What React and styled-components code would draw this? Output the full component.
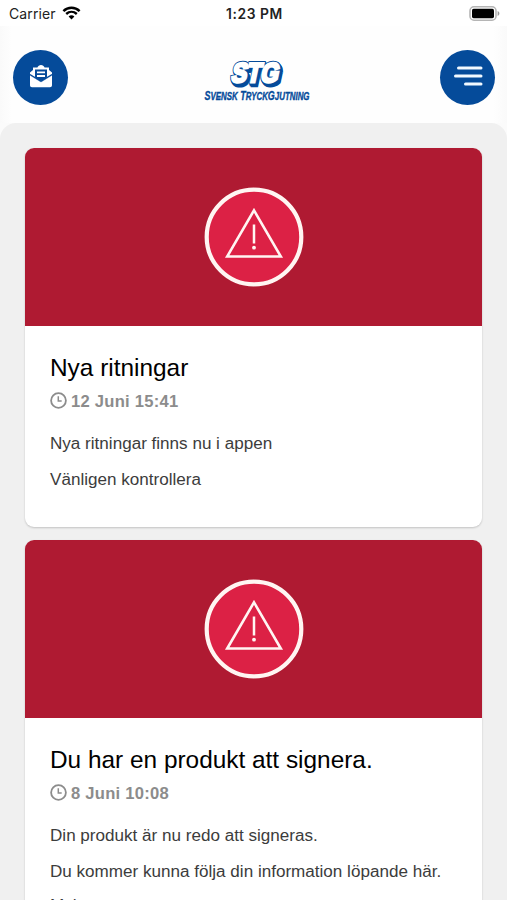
import React from "react";
import styled, { createGlobalStyle } from "styled-components";

const GlobalStyle = createGlobalStyle`
  * {
    box-sizing: border-box;
  }

  body {
    margin: 0;
    background-color: #fff;
    font-family: "Liberation Sans", Arial, sans-serif;
  }
`;

const AppContainer = styled.div`
  width: 100%;
  height: 900px;
  overflow: hidden;
  display: flex;
  flex-direction: column;
  background-color: #fbfbfb;
`;

const StatusBar = styled.div`
  height: 26px;
  flex-shrink: 0;
  padding: 0 7px 0 9px;
  display: grid;
  grid-template-columns: 1fr auto 1fr;
  align-items: center;
  background-color: #fff;
  font-family: Inter, sans-serif;
  color: #222;
`;

const Carrier = styled.div`
  display: flex;
  align-items: center;
  gap: 6px;
  font-size: 14px;
  letter-spacing: 0.1px;
  padding-top: 1px;

  svg {
    margin-top: -2px;
  }
`;

const Time = styled.span`
  font-size: 13.8px;
  font-weight: 600;
  letter-spacing: 0.6px;
  padding-top: 1px;
`;

const BatterySlot = styled.div`
  display: flex;
  justify-content: flex-end;
`;

const Header = styled.header`
  height: 97px;
  flex-shrink: 0;
  padding: 6px 12px 0 13px;
  display: flex;
  justify-content: space-between;
  background: linear-gradient(
    to right,
    #fafafa 0,
    #fefefe 12px,
    #fefefe 493px,
    #fafafa 100%
  );
`;

const RoundButton = styled.button`
  width: 55px;
  height: 55px;
  margin-top: 18px;
  padding: 0 0 3px;
  border: none;
  border-radius: 50%;
  background-color: #054b9a;
  display: flex;
  align-items: center;
  justify-content: center;
`;

const LogoSlot = styled.div`
  margin: 24px 0 0 5px;
`;

const Feed = styled.main`
  flex: 1;
  min-height: 0;
  overflow: hidden;
  padding: 25px 25px 0;
  border-radius: 16px 16px 0 0;
  background-color: #f0f0f0;
`;

const CardContainer = styled.article`
  width: 457px;
  height: 379px;
  margin-bottom: 13px;
  overflow: hidden;
  border-radius: 9px;
  background-color: #fff;
  box-shadow: 0px 1px 2px rgba(17, 17, 17, 0.2);
`;

const Banner = styled.div`
  height: 178px;
  display: flex;
  align-items: center;
  justify-content: center;
  background-color: #af1a32;
`;

const CardBody = styled.div`
  padding: 28px 25px 0;
`;

const Title = styled.h2`
  margin: 0;
  font-size: 24.4px;
  font-weight: 400;
  line-height: 28px;
  color: #000;
  white-space: nowrap;
`;

const DateRow = styled.div`
  margin-top: 10px;
  height: 20px;
  display: flex;
  align-items: center;
  gap: 4px;
  font-size: 16.6px;
  font-weight: 700;
  letter-spacing: 0.25px;
  line-height: 20px;
  color: #8c8c8c;

  svg {
    margin-top: -4px;
  }
`;

const Paragraphs = styled.div`
  margin-top: 22px;
`;

const CardText = styled.p`
  margin: 0 0 15.5px;
  font-size: 17.08px;
  line-height: 20px;
  color: #3c3c3c;
  white-space: nowrap;

  &:nth-child(3) {
    margin-top: -16.5px;
    padding-top: 0;
  }

  &:nth-child(2) {
    margin-bottom: 31px;
  }
`;

const cards = [
  {
    title: "Nya ritningar",
    date: "12 Juni 15:41",
    text: ["Nya ritningar finns nu i appen", "Vänligen kontrollera"],
  },
  {
    title: "Du har en produkt att signera.",
    date: "8 Juni 10:08",
    text: [
      "Din produkt är nu redo att signeras.",
      "Du kommer kunna följa din information löpande här.",
      "Mvh",
    ],
  },
];

function WifiIcon() {
  return (
    <svg width="19" height="14" viewBox="0 0 19 14" fill="none">
      <path d="M1.4 5.1C6 .7 13 .7 17.6 5.1" stroke="#000" strokeWidth="2.5" />
      <path d="M4.2 8C7.3 5.1 11.7 5.1 14.8 8" stroke="#000" strokeWidth="2.4" />
      <path d="M6.6 10.4C8.3 8.9 10.7 8.9 12.4 10.4L9.5 13.5z" fill="#000" />
    </svg>
  );
}

function BatteryIcon() {
  return (
    <svg width="31" height="15" viewBox="0 0 31 15">
      <rect x="1" y=".8" width="26" height="13.4" rx="4" fill="#fff" stroke="#b5b5b5" strokeWidth="1.6" />
      <rect x="3" y="2.8" width="22" height="9.4" rx="1.6" fill="#000" />
      <path d="M28.6 5.1c2.4.8 2.4 4 0 4.8z" fill="#999" />
    </svg>
  );
}

function MailIcon() {
  return (
    <svg width="24" height="24" viewBox="0 0 24 24">
      <path
        d="M1 8.6L4 6V3.6h4.4C9 1.9 10.4 1 12 1s3 .9 3.6 2.6H20V6l3 2.6v2.6L12 17.8 1 11.2z"
        fill="#fff"
      />
      <path d="M6 5.6h12v7.8l-6 3.8-6-3.8z" fill="#054b9a" />
      <path d="M8 7.4h8v1.9H8zM8 11h8v1.9H8z" fill="#fff" />
      <path d="M1 10.6l11 6.6 11-6.6" fill="none" stroke="#054b9a" strokeWidth="1.3" />
      <path d="M1 11.6l11 6.6 11-6.6v9.6c0 1.2-.8 2-2 2H3c-1.2 0-2-.8-2-2z" fill="#fff" />
    </svg>
  );
}

function MenuIcon() {
  return (
    <svg width="30" height="22" viewBox="0 0 30 22" stroke="#f2f9ff" strokeWidth="3" strokeLinecap="round">
      <path d="M5.5 3H28M2.5 11H28M12.5 19H28" />
    </svg>
  );
}

function LogoLetters(props) {
  return (
    <text
      x="0"
      y="0"
      textLength="47"
      lengthAdjust="spacingAndGlyphs"
      fontFamily="Liberation Sans, Arial, sans-serif"
      fontSize="27"
      fontWeight="700"
      strokeLinejoin="miter"
      {...props}
    >
      STG
    </text>
  );
}

function Logo() {
  return (
    <svg width="108" height="48" viewBox="0 0 108 48">
      <g transform="translate(27.5 26) skewX(-12)">
        {[4, 3, 2, 1].map((step) => (
          <g key={step} transform={`translate(${step * 0.7} ${step * 0.8})`}>
            <LogoLetters fill="#054b9a" stroke="#054b9a" strokeWidth="4.6" />
          </g>
        ))}
        <LogoLetters fill="#054b9a" stroke="#054b9a" strokeWidth="4.6" />
        <LogoLetters fill="#fff" stroke="#fff" strokeWidth="2.8" />
      </g>
      <text
        x="1.5"
        y="43.5"
        textLength="105"
        lengthAdjust="spacingAndGlyphs"
        fontFamily="Liberation Sans, Arial, sans-serif"
        fontSize="12"
        fontStyle="italic"
        fontWeight="700"
        fill="#054b9a"
        stroke="#054b9a"
        strokeWidth=".35"
      >
        S<tspan fontSize="10.6">VENSK</tspan> T<tspan fontSize="10.6">RYCK</tspan>G
        <tspan fontSize="10.6">JUTNING</tspan>
      </text>
    </svg>
  );
}

function AlertIcon() {
  return (
    <svg width="100" height="100" viewBox="0 0 100 100" fill="none" stroke="#fff5f2">
      <circle cx="50" cy="50" r="47.3" fill="#dc2145" strokeWidth="4.2" />
      <path d="M50 23.3L76.8 69.5H23.2z" strokeWidth="2.6" />
      <path d="M50 37.5v19" strokeWidth="2.5" />
      <circle cx="50" cy="60.7" r="1.9" fill="#fff5f2" stroke="none" />
    </svg>
  );
}

function ClockIcon() {
  return (
    <svg width="17" height="17" viewBox="0 0 17 17" fill="none" stroke="#8c8c8c">
      <circle cx="8.5" cy="8.5" r="7.4" strokeWidth="1.8" />
      <path d="M8.3 4.3v4.8h3.4" strokeWidth="1.5" />
    </svg>
  );
}

function Card(props) {
  const { title, date, text } = props;

  return (
    <CardContainer>
      <Banner>
        <AlertIcon />
      </Banner>
      <CardBody>
        <Title>{title}</Title>
        <DateRow>
          <ClockIcon />
          <span>{date}</span>
        </DateRow>
        <Paragraphs>
          {text.map((line) => (
            <CardText key={line}>{line}</CardText>
          ))}
        </Paragraphs>
      </CardBody>
    </CardContainer>
  );
}

export default function App() {
  return (
    <AppContainer>
      <GlobalStyle />
      <StatusBar>
        <Carrier>
          Carrier
          <WifiIcon />
        </Carrier>
        <Time>1:23 PM</Time>
        <BatterySlot>
          <BatteryIcon />
        </BatterySlot>
      </StatusBar>
      <Header>
        <RoundButton>
          <MailIcon />
        </RoundButton>
        <LogoSlot>
          <Logo />
        </LogoSlot>
        <RoundButton>
          <MenuIcon />
        </RoundButton>
      </Header>
      <Feed>
        {cards.map((card) => (
          <Card key={card.title} {...card} />
        ))}
      </Feed>
    </AppContainer>
  );
}
